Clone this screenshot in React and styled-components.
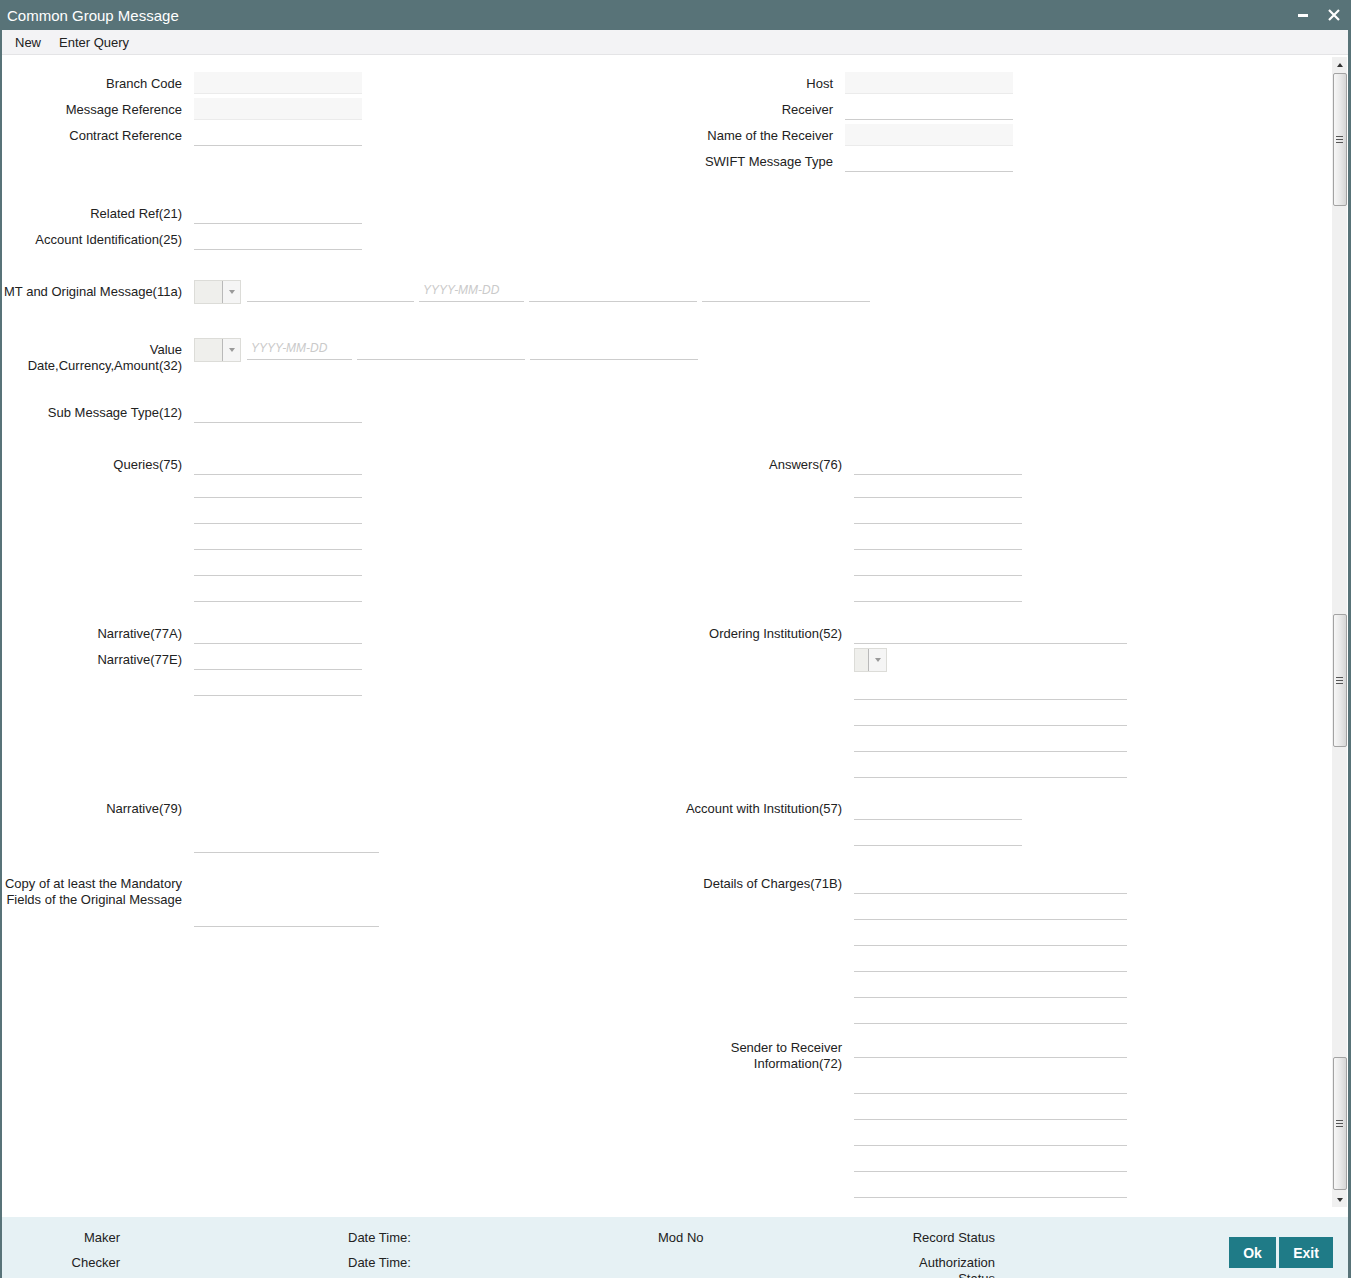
import React from 'react';
import styled, { createGlobalStyle } from 'styled-components';

const GlobalStyle = createGlobalStyle`
  html, body {
    margin: 0;
    padding: 0;
    background: #fff;
  }
  body {
    font-family: "Liberation Sans", Arial, sans-serif;
    font-size: 13px;
    color: #222;
  }
  * {
    box-sizing: border-box;
  }
`;

const Window = styled.div`
  width: 1351px;
  height: 1278px;
  display: flex;
  flex-direction: column;
  border-left: 2px solid #587378;
  border-right: 3px solid #587378;
  background: #fff;
  overflow: hidden;
`;

const TitleBar = styled.div`
  height: 30px;
  flex-shrink: 0;
  background: #587378;
  color: #fff;
  font-size: 15px;
  display: flex;
  align-items: center;
  padding: 0 8px 0 5px;
`;

const TitleText = styled.div`
  flex: 1;
`;

const TitleIcons = styled.div`
  display: flex;
  align-items: center;
  gap: 20px;
`;

const MenuBar = styled.div`
  height: 25px;
  flex-shrink: 0;
  background: #f3f3f5;
  border-bottom: 1px solid #e4e4e6;
  display: flex;
  align-items: center;
  gap: 18px;
  padding: 1px 0 0 13px;
`;

const MenuItem = styled.span`
  font-size: 13px;
  color: #222;
  cursor: pointer;
`;

const Main = styled.div`
  flex: 1;
  min-height: 0;
  display: flex;
`;

const Form = styled.div`
  flex: 1;
  padding-top: 17px;
  overflow: hidden;
`;

const Section = styled.div`
  display: grid;
  grid-template-columns: 650px 1fr;
  margin-top: ${(p) => p.$mt || 0}px;
`;

const Column = styled.div`
  display: flex;
  flex-direction: column;
`;

const Row = styled.div`
  display: flex;
  align-items: flex-start;
  margin-bottom: 4px;
`;

const Label = styled.label`
  width: ${(p) => p.$w || 180}px;
  flex-shrink: 0;
  margin-right: 12px;
  padding-top: 4px;
  line-height: 16px;
  text-align: right;
  font-size: 13px;
  color: #222;
`;

const Inline = styled.div`
  display: flex;
  align-items: flex-start;
  gap: 5px;
`;

const Stack = styled.div`
  display: flex;
  flex-direction: column;
  gap: 4px;
`;

const Field = styled.div`
  width: ${(p) => p.$w || 168}px;
  height: ${(p) => p.$h || 22}px;
  margin-top: ${(p) => p.$mt || 0}px;
  flex-shrink: 0;
  background: ${(p) => (p.$disabled ? '#f7f7f7' : 'transparent')};
  border-bottom: 1px solid ${(p) => (p.$disabled ? '#ebebeb' : '#cdcdcd')};
`;

const DateField = styled.div`
  width: 105px;
  height: 22px;
  flex-shrink: 0;
  border-bottom: 1px solid #cdcdcd;
  padding-left: 4px;
  line-height: 20px;
  font-size: 12px;
  font-style: italic;
  color: #cacaca;
`;

const Select = styled.div`
  width: ${(p) => p.$w || 47}px;
  height: 24px;
  flex-shrink: 0;
  margin-right: ${(p) => p.$mr || 0}px;
  display: flex;
  background: #efefec;
  border: 1px solid #dcdcd8;
`;

const SelectButton = styled.div`
  margin-left: auto;
  width: 18px;
  height: 100%;
  border-left: 1px solid #b9b9b9;
  background: #f5f5f5;
  display: flex;
  align-items: center;
  justify-content: center;
  &::after {
    content: '';
    border-left: 3px solid transparent;
    border-right: 3px solid transparent;
    border-top: 4px solid #9a9a9a;
  }
`;

const ScrollTrack = styled.div`
  width: 15px;
  flex-shrink: 0;
  margin: 2px 1px 10px 0;
  background: #f0f0f0;
  display: flex;
  flex-direction: column;
  align-items: center;
`;

const ScrollArrow = styled.div`
  width: 100%;
  height: 15px;
  flex-shrink: 0;
  margin-top: ${(p) => (p.$down ? 'auto' : '0')};
  display: flex;
  align-items: center;
  justify-content: center;
  &::after {
    content: '';
    border-left: 3px solid transparent;
    border-right: 3px solid transparent;
    ${(p) => (p.$down ? 'border-top: 4px solid #333;' : 'border-bottom: 4px solid #333;')}
  }
`;

const Thumb = styled.div`
  width: 14px;
  height: 133px;
  flex-shrink: 0;
  margin-top: ${(p) => p.$mt}px;
  border: 1px solid #a3a3a3;
  border-radius: 2px;
  background: linear-gradient(to right, #f7f7f7, #e9e9e9 50%, #d6d6d6);
  display: flex;
  align-items: center;
  justify-content: center;
`;

const Footer = styled.div`
  height: 61px;
  flex-shrink: 0;
  background: #e6f1f4;
  display: flex;
  align-items: flex-start;
`;

const FooterCol = styled.div`
  width: ${(p) => p.$w}px;
  margin-left: ${(p) => p.$ml || 0}px;
  flex-shrink: 0;
  padding-top: 13px;
  display: flex;
  flex-direction: column;
  gap: 9px;
  text-align: ${(p) => p.$align || 'left'};
`;

const FooterLabel = styled.div`
  line-height: 16px;
  min-height: 16px;
  font-size: 13px;
  color: #222;
`;

const Buttons = styled.div`
  margin: 20px 15px 0 auto;
  display: flex;
  gap: 3px;
`;

const Button = styled.button`
  width: ${(p) => p.$w}px;
  height: 31px;
  border: none;
  background: #1f7b87;
  color: #fff;
  font-family: "Liberation Sans", Arial, sans-serif;
  font-size: 14px;
  font-weight: bold;
  cursor: pointer;
  padding: 0;
`;

const Grip = () => (
  <svg width="7" height="7" viewBox="0 0 7 7">
    <path d="M0 0.5h7M0 3.5h7M0 6.5h7" stroke="#555" strokeWidth="1" />
  </svg>
);

const Dropdown = (props) => (
  <Select {...props}>
    <SelectButton />
  </Select>
);

const Lines = ({ count, w, first = [] }) => (
  <Stack>
    {Array.from({ length: count }).map((_, i) => (
      <Field key={i} $w={w} $mt={first[i] || 0} />
    ))}
  </Stack>
);

function App() {
  return (
    <>
      <GlobalStyle />
      <Window>
        <TitleBar>
          <TitleText>Common Group Message</TitleText>
          <TitleIcons>
            <svg width="10" height="10" viewBox="0 0 10 10">
              <rect x="0" y="4" width="10" height="3" fill="#fff" />
            </svg>
            <svg width="12" height="12" viewBox="0 0 12 12">
              <path d="M1 1L11 11M11 1L1 11" stroke="#fff" strokeWidth="2.2" />
            </svg>
          </TitleIcons>
        </TitleBar>
        <MenuBar>
          <MenuItem>New</MenuItem>
          <MenuItem>Enter Query</MenuItem>
        </MenuBar>

        <Main>
          <Form>
            <Section>
              <Column>
                <Row>
                  <Label>Branch Code</Label>
                  <Field $disabled />
                </Row>
                <Row>
                  <Label>Message Reference</Label>
                  <Field $disabled />
                </Row>
                <Row>
                  <Label>Contract Reference</Label>
                  <Field />
                </Row>
              </Column>
              <Column>
                <Row>
                  <Label $w={181}>Host</Label>
                  <Field $disabled />
                </Row>
                <Row>
                  <Label $w={181}>Receiver</Label>
                  <Field />
                </Row>
                <Row>
                  <Label $w={181}>Name of the Receiver</Label>
                  <Field $disabled />
                </Row>
                <Row>
                  <Label $w={181}>SWIFT Message Type</Label>
                  <Field />
                </Row>
              </Column>
            </Section>

            <Section $mt={26}>
              <Column>
                <Row>
                  <Label>Related Ref(21)</Label>
                  <Field />
                </Row>
                <Row>
                  <Label>Account Identification(25)</Label>
                  <Field />
                </Row>
              </Column>
              <Column />
            </Section>

            <Section $mt={26}>
              <Column>
                <Row>
                  <Label>MT and Original Message(11a)</Label>
                  <Inline>
                    <Dropdown $mr={1} />
                    <Field $w={167} />
                    <DateField>YYYY-MM-DD</DateField>
                    <Field />
                    <Field />
                  </Inline>
                </Row>
              </Column>
              <Column />
            </Section>

            <Section $mt={30}>
              <Column>
                <Row>
                  <Label>Value Date,Currency,Amount(32)</Label>
                  <Inline>
                    <Dropdown $mr={1} />
                    <DateField>YYYY-MM-DD</DateField>
                    <Field />
                    <Field />
                  </Inline>
                </Row>
              </Column>
              <Column />
            </Section>

            <Section $mt={23}>
              <Column>
                <Row>
                  <Label>Sub Message Type(12)</Label>
                  <Field />
                </Row>
              </Column>
              <Column />
            </Section>

            <Section $mt={26}>
              <Column>
                <Row>
                  <Label>Queries(75)</Label>
                  <Lines count={6} first={[0, -3]} />
                </Row>
              </Column>
              <Column>
                <Row>
                  <Label $w={190}>Answers(76)</Label>
                  <Lines count={6} first={[0, -3]} />
                </Row>
              </Column>
            </Section>

            <Section $mt={16}>
              <Column>
                <Row>
                  <Label>Narrative(77A)</Label>
                  <Field />
                </Row>
                <Row>
                  <Label>Narrative(77E)</Label>
                  <Lines count={2} />
                </Row>
              </Column>
              <Column>
                <Row>
                  <Label $w={190}>Ordering Institution(52)</Label>
                  <Stack>
                    <Field $w={273} />
                    <Dropdown $w={33} />
                    <Field $w={273} $mt={2} />
                    <Field $w={273} />
                    <Field $w={273} />
                    <Field $w={273} />
                  </Stack>
                </Row>
              </Column>
            </Section>

            <Section $mt={15}>
              <Column>
                <Row>
                  <Label>Narrative(79)</Label>
                  <Field $w={185} $h={56} />
                </Row>
              </Column>
              <Column>
                <Row>
                  <Label $w={190}>Account with Institution(57)</Label>
                  <Lines count={2} first={[1]} />
                </Row>
              </Column>
            </Section>

            <Section $mt={15}>
              <Column>
                <Row>
                  <Label>Copy of at least the Mandatory Fields of the Original Message</Label>
                  <Field $w={185} $h={55} />
                </Row>
              </Column>
              <Column>
                <Row>
                  <Label $w={190}>Details of Charges(71B)</Label>
                  <Lines count={6} w={273} />
                </Row>
              </Column>
            </Section>

            <Section $mt={8}>
              <Column />
              <Column>
                <Row>
                  <Label $w={190}>Sender to Receiver Information(72)</Label>
                  <Lines count={6} w={273} first={[0, 10]} />
                </Row>
              </Column>
            </Section>
          </Form>

          <ScrollTrack>
            <ScrollArrow />
            <Thumb $mt={1}>
              <Grip />
            </Thumb>
            <Thumb $mt={408}>
              <Grip />
            </Thumb>
            <Thumb $mt={310}>
              <Grip />
            </Thumb>
            <ScrollArrow $down />
          </ScrollTrack>
        </Main>

        <Footer>
          <FooterCol $w={118} $align="right">
            <FooterLabel>Maker</FooterLabel>
            <FooterLabel>Checker</FooterLabel>
          </FooterCol>
          <FooterCol $w={310} $ml={228}>
            <FooterLabel>Date Time:</FooterLabel>
            <FooterLabel>Date Time:</FooterLabel>
          </FooterCol>
          <FooterCol $w={242}>
            <FooterLabel>Mod No</FooterLabel>
            <FooterLabel />
          </FooterCol>
          <FooterCol $w={95} $align="right">
            <FooterLabel>Record Status</FooterLabel>
            <FooterLabel>Authorization Status</FooterLabel>
          </FooterCol>
          <Buttons>
            <Button $w={47}>Ok</Button>
            <Button $w={54}>Exit</Button>
          </Buttons>
        </Footer>
      </Window>
    </>
  );
}

export default App;
